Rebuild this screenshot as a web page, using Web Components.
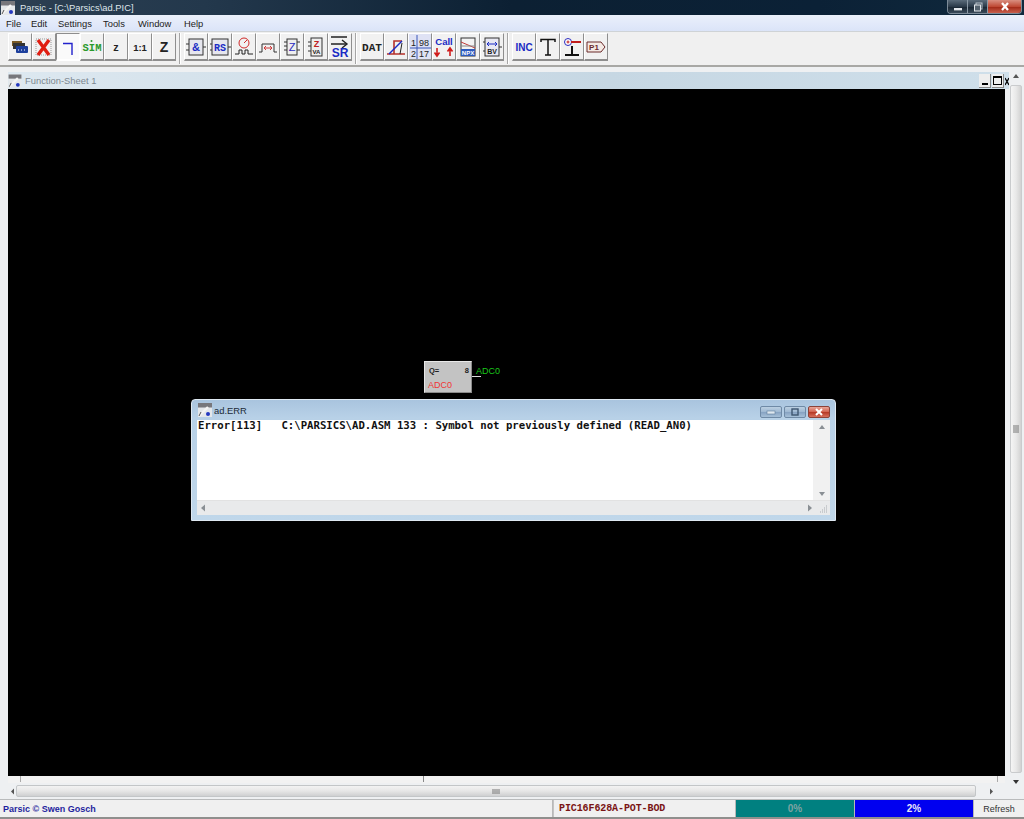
<!DOCTYPE html>
<html><head><meta charset="utf-8"><title>Parsic</title>
<style>
html,body{margin:0;padding:0;background:#eef0f2;width:1024px;height:819px;overflow:hidden;font-family:"Liberation Sans",sans-serif}
parsic-app{display:block;width:1024px;height:819px}
.tsvg{display:block}
</style></head>
<body>
<template id="logo"><svg width="14" height="14" viewBox="0 0 14 14"><path d="M0 0h14v14H0z" fill="#dfe3e6"/><path d="M0 0h14v5H0z" fill="#6c6c70"/><path d="M1 13 11 5" stroke="#e8e8e8" stroke-width="2"/><circle cx="10" cy="11" r="2" fill="#2233bb"/></svg></template>
<script>
function def(name, css, html, init){
  customElements.define(name, class extends HTMLElement{
    constructor(){super();const s=this.attachShadow({mode:'open'});s.innerHTML='<style>'+css+'</style>'+html;}
    connectedCallback(){if(init)init(this);}
  });
}
const LOGO='<svg width="14" height="14" viewBox="0 0 14 14" style="display:block"><rect width="14" height="14" fill="#e4e7ea"/><rect width="14" height="4.5" fill="#77777c"/><path d="M1 13 10 4" stroke="#f4f4f4" stroke-width="2.4"/><path d="M3 9 1 13" stroke="#555" stroke-width="1"/><circle cx="10" cy="11" r="2" fill="#2438c0"/></svg>';

def('parsic-app',':host{display:block;width:1024px;height:819px;position:relative;overflow:hidden}.c{display:flex;flex-direction:column;height:100%}',
 '<div class="c"><slot></slot></div>');

def('app-titlebar',`:host{display:flex;align-items:center;height:15px;flex:none;background:linear-gradient(90deg,#2c3f52 0,#23384c 20%,#0c2033 50%,#0b2136 80%,#10293d 100%);color:#dfe5ea;font:9.4px "Liberation Sans",sans-serif;position:relative}
.i{margin:0 4px 0 1px;flex:none}.t{white-space:nowrap;padding-left:1px}
.b{position:absolute;right:2px;top:0;display:flex;height:14px;border:1px solid #7d8b98;border-top:0;border-radius:0 0 4px 4px;overflow:hidden;width:75px;box-sizing:border-box}
.b span{display:flex;align-items:center;justify-content:center;height:100%;border-right:1px solid #8b99a5;background:linear-gradient(#5b6c7b,#2b3a49 50%,#1a2835 55%,#3a4a58)}
.m{width:19px}.r{width:19px}.x{flex:1;border:0!important;background:linear-gradient(#d98f80,#bf4a35 50%,#a32b18 55%,#c9604d)!important;color:#fff;font:bold 10px "Liberation Sans";}`,
 `<span class="i">${LOGO}</span><span class="t"><slot></slot></span><div class="b"><span class="m"><svg width="10" height="8"><rect x="1" y="5" width="8" height="2.4" fill="#e4e8ec"/></svg></span><span class="r"><svg width="10" height="10"><rect x="3" y="1" width="6" height="6" fill="none" stroke="#b9c3cc"/><rect x="1.5" y="3" width="6" height="6" fill="#55636f" stroke="#e3e8ec"/></svg></span><span class="x"><svg width="10" height="9"><path d="M2 1 8 8M8 1 2 8" stroke="#fff" stroke-width="2.2"/></svg></span></div>`);

def('app-menubar',`:host{display:flex;height:16px;flex:none;background:linear-gradient(#eaf0fa,#e2e9fa 55%,#dbe4f8);align-items:center;color:#222;font:9.4px "Liberation Sans",sans-serif;padding-left:6px;box-sizing:border-box;gap:0}`,'<slot></slot>');
def('menu-item',`:host{display:block;white-space:nowrap}`,'<slot></slot>');

def('app-toolbar',`:host{display:flex;flex:none;height:36px;box-sizing:border-box;background:#f0f0f0;border-top:1px solid #cfd3d6;border-bottom:2px solid #a8a8a5;padding:1px 0 0 8px;align-items:flex-start}`,'<slot></slot>');
def('tool-sep',`:host{display:block;width:2px;height:31px;margin:0 3px 0 3px;background:linear-gradient(90deg,#a5a5a5 50%,#fff 50%)}`,'');
def('tool-btn',`:host{display:flex;align-items:center;justify-content:center;width:24px;height:28px;box-sizing:border-box;background:#f1f1f1;border-right:1px solid #8e8e8e;border-bottom:2px solid #8e8e8e;border-top:1px solid #fff;border-left:1px solid #fff;flex:none;overflow:hidden}
:host([pressed]){background:#fafafa;border-right-color:#fff;border-bottom-color:#fff;border-left-color:#8e8e8e;border-top-color:#8e8e8e}`,'<slot></slot>');

def('app-workspace',`:host{display:grid;grid-template-columns:1fr 15px;flex:1;min-height:0;background:#eef0f2;border-bottom:0}`,'<slot></slot>');
def('sheet-window',`:host{display:flex;flex-direction:column;padding:5px 0 0 8px;min-width:0;box-sizing:border-box;height:100%;overflow:hidden}
.h{display:flex;height:17px;flex:none;align-items:center;background:linear-gradient(90deg,#dde8f0,#c6d7e3 60%,#cfdfea);color:#7c8790;font:9.4px "Liberation Sans",sans-serif;position:relative;gap:3px}
.h .i{transform:scale(.95)}.bt{position:absolute;right:0;top:2px;display:flex;gap:1px}
.bt span{display:flex;width:12px;height:14px;background:#eee;border-right:1px solid #888;border-bottom:1px solid #888;align-items:center;justify-content:center;box-sizing:border-box}
.bt .z{width:4px;border:0;overflow:hidden;background:transparent;font:bold 8px "Liberation Sans";color:#000}
.k{flex:1;background:#000;position:relative;margin-right:4px;min-height:0}
.r{height:7px;flex:none;position:relative;background:#f2f2f2;margin-right:4px}
.r i{position:absolute;left:12px;top:0;width:1px;height:6px;background:#aaa}.r b{position:absolute;left:415px;top:0;width:1px;height:6px;background:#888}
.r u{position:absolute;right:7px;top:0;width:1px;height:6px;background:#aaa}`,
 `<div class="h"><span class="i">${LOGO}</span><span><slot name="title"></slot></span><div class="bt"><span><svg width="8" height="10"><rect x="1" y="7" width="6" height="2"/></svg></span><span><svg width="11" height="11"><rect x="1.5" y="1.5" width="8" height="8" fill="none" stroke="#000"/><rect x="1" y="1" width="9" height="2"/></svg></span><span class="z"><svg width="4" height="9"><path d="M0 1 4 8M4 1 0 8" stroke="#000" stroke-width="1.3"/></svg></span></div></div><div class="k"><slot></slot></div><div class="r"><i></i><b></b><u></u></div>`);
def('h-scroll',`:host{display:flex;flex:none;height:16px;margin:0 0 0 0;align-items:center;background:#eef0f2;box-sizing:border-box;padding:0 3px 0 8px;font-size:0}
.a{width:8px;flex:none;display:flex;justify-content:center}
.t{flex:1;height:12px;margin:0 0 0 0;border:1px solid #c3c6c8;border-radius:2px;background:linear-gradient(#f3f3f3,#e6e6e6 50%,#cfd0d1);display:flex;align-items:center;justify-content:center;box-sizing:border-box}
.z{width:30px;flex:none;display:flex;justify-content:center}`,
 `<span class="a"><svg width="5" height="7"><path d="M4 0.5 1 3.5 4 6.5z" fill="#555"/></svg></span><div class="t"><svg width="8" height="5"><path d="M1 0v5M3 0v5M5 0v5M7 0v5" stroke="#777"/></svg></div><span class="z"><svg width="5" height="7"><path d="M1 .5 4 3.5 1 6.5z" fill="#555"/></svg></span>`);
def('v-scroll',`:host{display:flex;flex-direction:column;align-items:center;background:#eef0f2;height:100%;box-sizing:border-box;padding:5px 1px 0 0;overflow:hidden}
.t{flex:1;width:12px;margin:4px 0;border:1px solid #c9cbcd;border-radius:2px;background:linear-gradient(90deg,#f5f5f5,#e8e8e8 50%,#d2d2d2);display:flex;align-items:center;justify-content:center;box-sizing:border-box}
svg{flex:none}`,
 `<svg width="8" height="9"><path d="M1 6 4 2 7 6z" fill="#555"/></svg><div class="t"><svg width="6" height="8"><path d="M0 1h6M0 3h6M0 5h6M0 7h6" stroke="#777"/></svg></div><svg width="8" height="22"><path d="M1 3 4 7 7 3z" fill="#333"/></svg>`);

def('logic-block',`:host{position:absolute;display:block;left:416px;top:272px;width:48px;height:32px;box-sizing:border-box;background:#c3c3c3;border:1px solid #e8e8e8;border-right-color:#8a8a8a;border-bottom-color:#8a8a8a;font:8.5px "Liberation Sans",sans-serif;color:#222}
.q{display:flex;justify-content:space-between;padding:4px 2px 0 4px;font-weight:bold;font-size:7.5px;height:14px;box-sizing:border-box}
.n{color:#f03535;padding:4px 0 0 3px;font-size:9px}
.w{position:absolute;left:47px;top:14px;width:9px;height:1px;background:#ddd}.o{position:absolute;left:51px;top:4px;color:#19c619;font-size:9px}`,
 `<div class="q"><span>Q=</span><span>8</span></div><div class="n"><slot></slot></div><i class="w"></i><span class="o"><slot name="out"></slot></span>`);

def('child-window',`:host{position:absolute;left:183px;top:310px;display:flex;flex-direction:column;width:645px;height:122px;box-sizing:border-box;background:linear-gradient(#a9c4de,#b8d1e7 15%,#c0d7ea);border:1px solid #dfe9f2;border-radius:4px 4px 0 0;padding:0 5px 5px 5px}
.h{display:flex;height:20px;flex:none;align-items:center;font:9.4px "Liberation Sans",sans-serif;color:#1b2a38;gap:2px;position:relative;margin-left:1px}
.btn{position:absolute;right:0;top:6px;display:flex;gap:2px}
.btn span{display:flex;align-items:center;justify-content:center;width:22px;height:12px;box-sizing:border-box;border:1px solid #6f8aa6;border-radius:2px;background:linear-gradient(#bcd0e2,#9db7d1 50%,#88a4c3 55%,#a6c0d8)}
.btn .x{background:linear-gradient(#e8a79a,#d2604d 50%,#b73b28 55%,#d8705d);border-color:#8c4238;width:22px}
.b{flex:1;display:flex;flex-direction:column;background:#fff;min-height:0}
.m{flex:1;display:flex;min-height:0}
.tx{flex:1;padding:0 1px;font:bold 10.67px/12px "DejaVu Sans Mono","Liberation Mono",monospace;color:#111;white-space:pre;overflow:hidden}
.v{width:17px;flex:none;background:#f1f1f1;display:flex;flex-direction:column;align-items:center;justify-content:space-between;padding:4px 0 3px;box-sizing:border-box}
.hs{height:15px;flex:none;background:#e9eaeb;display:flex;align-items:center;justify-content:space-between;padding:0 17px 0 3px;position:relative;border-top:1px solid #e2e2e2;box-sizing:border-box}
.g{position:absolute;right:2px;bottom:1px}`,
 `<div class="h"><span>${LOGO}</span><span><slot name="title"></slot></span><div class="btn"><span><svg width="10" height="6"><rect x="1" y="2" width="8" height="3" fill="#dfe8f0" stroke="#5f7d9b" stroke-width=".6"/></svg></span><span><svg width="10" height="8"><rect x="2" y="1" width="6" height="6" fill="none" stroke="#3e5670" stroke-width="1.4"/></svg></span><span class="x"><svg width="10" height="8"><path d="M2 1 8 7M8 1 2 7" stroke="#fff" stroke-width="2"/></svg></span></div></div><div class="b"><div class="m"><div class="tx"><slot></slot></div><div class="v"><svg width="8" height="6"><path d="M1 5 4 1 7 5z" fill="#8a8f94"/></svg><svg width="8" height="6"><path d="M1 1 4 5 7 1z" fill="#8a8f94"/></svg></div></div><div class="hs"><svg width="6" height="8"><path d="M5 .5 1 4 5 7.5z" fill="#8a8f94"/></svg><svg width="6" height="8"><path d="M1 .5 5 4 1 7.5z" fill="#8a8f94"/></svg><svg class="g" width="9" height="9"><path d="M7 1h1M5 3h1M7 3h1M3 5h1M5 5h1M7 5h1M1 7h1M3 7h1M5 7h1M7 7h1" stroke="#a9adb1"/></svg></div></div>`);

def('app-statusbar',`:host{display:flex;flex:none;height:20px;box-sizing:border-box;background:#f0f0f0;border-top:1px solid #b9bbbc;border-bottom:2px solid #8f8f8d;font:bold 9px "Liberation Sans",sans-serif;align-items:stretch}`,'<slot></slot>');
def('status-cell',`:host{display:flex;align-items:center;box-sizing:border-box;white-space:nowrap;overflow:hidden;border-right:1px solid #b8b8b8}`,'<slot></slot>');
</script>

<parsic-app>
  <app-titlebar>Parsic - [C:\Parsics\ad.PIC]</app-titlebar>
  <app-menubar>
    <menu-item style="width:25px">File</menu-item><menu-item style="width:27px">Edit</menu-item><menu-item style="width:45px">Settings</menu-item><menu-item style="width:35px">Tools</menu-item><menu-item style="width:46px">Window</menu-item><menu-item>Help</menu-item>
  </app-menubar>
  <app-toolbar>
    <tool-btn><svg width="18" height="14" viewBox="0 0 18 14"><rect x="1" y="1" width="10" height="5" fill="#7a5a24"/><rect x="2" y="3" width="12" height="6" fill="#333"/><rect x="5" y="6" width="12" height="7" rx="1" fill="#1d3f9c"/><path d="M7 10h1M10 10h1M13 10h1" stroke="#fff"/></svg></tool-btn>
    <tool-btn><svg width="18" height="20" viewBox="0 0 18 20"><rect x="1" y="2" width="15" height="16" fill="none" stroke="#999" stroke-dasharray="1 1"/><path d="M3 3 14 18M14 3 3 18" stroke="#e01e12" stroke-width="3.4"/></svg></tool-btn>
    <tool-btn pressed><svg width="16" height="16" viewBox="0 0 16 16"><path d="M3 4.5H12V16" fill="none" stroke="#2222cc" stroke-width="1.4"/></svg></tool-btn>
    <tool-btn><svg width="22" height="16" viewBox="0 0 22 16"><text x="11" y="12" text-anchor="middle" font-family="Liberation Mono" font-weight="bold" font-size="10.5" fill="#2b9a2b">SIM</text><circle cx="10.5" cy="2" r="1" fill="#2b9a2b"/></svg></tool-btn>
    <tool-btn><svg width="16" height="16" viewBox="0 0 16 16"><text x="8" y="12" text-anchor="middle" font-family="Liberation Mono" font-weight="bold" font-size="10" fill="#222">z</text></svg></tool-btn>
    <tool-btn><svg width="22" height="16" viewBox="0 0 22 16"><text x="11" y="12" text-anchor="middle" font-family="Liberation Sans" font-weight="bold" font-size="9.5" fill="#222">1:1</text></svg></tool-btn>
    <tool-btn><svg width="16" height="16" viewBox="0 0 16 16"><text x="8" y="13" text-anchor="middle" font-family="Liberation Sans" font-weight="bold" font-size="14" fill="#222">Z</text></svg></tool-btn>
    <tool-sep></tool-sep>
    <tool-btn><svg width="22" height="20" viewBox="0 0 22 20"><path d="M1 7h3M1 13h3M18 10h3" stroke="#333"/><rect x="4" y="2" width="14" height="16" fill="#e6e6ee" stroke="#333"/><text x="11" y="14" text-anchor="middle" font-family="Liberation Sans" font-weight="bold" font-size="11" fill="#1a2bc4">&amp;</text></svg></tool-btn>
    <tool-btn><svg width="22" height="20" viewBox="0 0 22 20"><path d="M1 7h2M1 13h2M19 10h3" stroke="#333"/><rect x="3" y="2" width="16" height="16" fill="#e6e6ee" stroke="#333"/><text x="11" y="14" text-anchor="middle" font-family="Liberation Mono" font-weight="bold" font-size="10" fill="#1a2bc4">RS</text></svg></tool-btn>
    <tool-btn><svg width="20" height="22" viewBox="0 0 20 22"><circle cx="10" cy="7" r="5" fill="none" stroke="#d02a2a"/><path d="M10 7 13 4" stroke="#d02a2a"/><path d="M1 18h4v-4h3v4h3v-4h3v4h5" fill="none" stroke="#222"/></svg></tool-btn>
    <tool-btn><svg width="20" height="18" viewBox="0 0 20 18"><path d="M1 14h3V6h12v8h3" fill="none" stroke="#333"/><path d="M6 10h8M6 10l2-2M6 10l2 2M14 10l-2-2M14 10l-2 2" stroke="#d03a3a"/></svg></tool-btn>
    <tool-btn><svg width="20" height="20" viewBox="0 0 20 20"><rect x="5" y="2" width="10" height="16" fill="#eee" stroke="#333"/><path d="M2 5h3M2 9h3M2 13h3M15 5h3M15 13h3" stroke="#333"/><text x="10" y="14" text-anchor="middle" font-family="Liberation Sans" font-size="11" fill="#2a2ac0">Z</text></svg></tool-btn>
    <tool-btn><svg width="20" height="20" viewBox="0 0 20 20"><rect x="5" y="1" width="11" height="18" fill="#eee" stroke="#333"/><path d="M2 5h3M2 9h3M2 14h3" stroke="#333"/><text x="10.5" y="10" text-anchor="middle" font-family="Liberation Sans" font-size="9" font-weight="bold" fill="#c02020">Z</text><text x="10.5" y="17" text-anchor="middle" font-family="Liberation Sans" font-size="6" font-weight="bold" fill="#222">VA</text></svg></tool-btn>
    <tool-btn><svg width="20" height="24" viewBox="0 0 20 24"><path d="M1 2h16M1 9h15" stroke="#222" stroke-width="1.4"/><path d="M12 5l5 4-5 4" fill="none" stroke="#222" stroke-width="1.4"/><text x="10" y="22" text-anchor="middle" font-family="Liberation Sans" font-weight="bold" font-size="12" fill="#1a2bc4">SR</text></svg></tool-btn>
    <tool-sep></tool-sep>
    <tool-btn><svg width="22" height="16" viewBox="0 0 22 16"><text x="11" y="12" text-anchor="middle" font-family="Liberation Mono" font-weight="bold" font-size="10" fill="#222" textLength="20" lengthAdjust="spacingAndGlyphs">DAT</text></svg></tool-btn>
    <tool-btn><svg width="20" height="20" viewBox="0 0 20 20"><path d="M1 17H19M8 17V4H16" fill="none" stroke="#b5302a" stroke-width="1.6"/><path d="M3 17 16 4" stroke="#1a2bc4" stroke-width="1.5"/><path d="M14 17 16 6" stroke="#222"/></svg></tool-btn>
    <tool-btn style="background:#dfe2f4"><svg width="22" height="24" viewBox="0 0 22 24"><path d="M8 0V24M1 13H22" stroke="#3b57b8"/><text x="7" y="11" text-anchor="end" font-family="Liberation Sans" font-size="9" fill="#222">1</text><text x="15" y="11" text-anchor="middle" font-family="Liberation Sans" font-size="9" fill="#222">98</text><text x="7" y="22" text-anchor="end" font-family="Liberation Sans" font-size="9" fill="#222">2</text><text x="15" y="22" text-anchor="middle" font-family="Liberation Sans" font-size="9" fill="#222">17</text></svg></tool-btn>
    <tool-btn><svg width="22" height="24" viewBox="0 0 22 24"><text x="11" y="10" text-anchor="middle" font-family="Liberation Sans" font-weight="bold" font-size="9.5" fill="#1a2bc4">Call</text><path d="M4 13v7M1.5 17.5 4 21l2.500-3.500M17 21v-7M14.500 16.500 17 13l2.500 3.500" fill="none" stroke="#d01c1c" stroke-width="1.6"/></svg></tool-btn>
    <tool-btn><svg width="20" height="20" viewBox="0 0 20 20"><rect x="3" y="1" width="14" height="18" fill="#f3f3f3" stroke="#333"/><path d="M3 5 17 11" stroke="#c23c3c"/><path d="M3 9 17 9" stroke="#888"/><rect x="3" y="12" width="14" height="7" fill="#2d5bbf"/><text x="10" y="18" text-anchor="middle" font-family="Liberation Sans" font-size="6" font-weight="bold" fill="#fff">NPX</text></svg></tool-btn>
    <tool-btn><svg width="20" height="20" viewBox="0 0 20 20"><path d="M1 5h2M1 14h2M17 10h3" stroke="#333"/><rect x="3" y="1" width="14" height="18" fill="#e8e8f2" stroke="#333"/><path d="M5 7h10M5 7l2-2M5 7l2 2M15 7l-2-2M15 7l-2 2" stroke="#1a2bc4"/><text x="10" y="17" text-anchor="middle" font-family="Liberation Sans" font-size="7" font-weight="bold" fill="#222">BV</text></svg></tool-btn>
    <tool-sep></tool-sep>
    <tool-btn><svg width="22" height="16" viewBox="0 0 22 16"><text x="11" y="12" text-anchor="middle" font-family="Liberation Sans" font-weight="bold" font-size="10" fill="#1a2bc4">INC</text></svg></tool-btn>
    <tool-btn><svg width="18" height="20" viewBox="0 0 18 20"><path d="M2 5V2.500H16V5M9 2.500V18M6 18h6" fill="none" stroke="#111" stroke-width="1.5"/></svg></tool-btn>
    <tool-btn><svg width="20" height="22" viewBox="0 0 20 22"><circle cx="6" cy="6" r="3.500" fill="#fff" stroke="#2a2ac0"/><path d="M4.500 6h3M6 4.500v3" stroke="#c01c1c"/><path d="M9 6h10" stroke="#c01c1c" stroke-width="2"/><path d="M10 10V19M3 19H17" stroke="#111" stroke-width="2"/></svg></tool-btn>
    <tool-btn><svg width="20" height="14" viewBox="0 0 20 14"><path d="M1 2H15L19 7 15 12H1z" fill="#f4e9e4" stroke="#6b2a2a"/><text x="8" y="10" text-anchor="middle" font-family="Liberation Sans" font-size="8" font-weight="bold" fill="#6b2a2a">P1</text></svg></tool-btn>
  </app-toolbar>
  <app-workspace>
    <div style="display:flex;flex-direction:column;min-width:0;min-height:0;position:relative">
      <sheet-window style="flex:1;min-height:0"><span slot="title">Function-Sheet 1</span>
        <logic-block>ADC0<span slot="out">ADC0</span></logic-block>
        <child-window><span slot="title">ad.ERR</span>Error[113]   C:\PARSICS\AD.ASM 133 : Symbol not previously defined (READ_AN0)</child-window>
      </sheet-window>
      <h-scroll></h-scroll>
    </div>
    <v-scroll></v-scroll>
  </app-workspace>
  <app-statusbar>
    <status-cell style="width:553px;padding-left:3px;color:#1f1f9e">Parsic © Swen Gosch</status-cell>
    <status-cell style="width:183px;padding-left:5px;color:#7a1414;font-family:'Liberation Mono',monospace;font-size:10px;letter-spacing:-.1px;border-left:1px solid #c4c4c4">PIC16F628A-POT-BOD</status-cell>
    <status-cell style="width:119px;justify-content:center;background:#008080;color:#7fa3a3;font-weight:bold;font-size:10px">0%</status-cell>
    <status-cell style="width:119px;justify-content:center;background:#0000f0;color:#e8e8f8;font-weight:bold;font-size:10px">2%</status-cell>
    <status-cell style="flex:1;justify-content:center;font-weight:normal;color:#333;border:0">Refresh</status-cell>
  </app-statusbar>
</parsic-app>
</body></html>
